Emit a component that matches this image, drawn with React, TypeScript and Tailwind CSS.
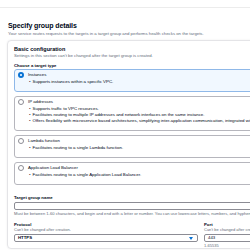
const font = "font-['Liberation_Sans',Arial,sans-serif]";

type TargetType = {
  label: string;
  bullets: string[];
  selected?: boolean;
};

const targetTypes: TargetType[] = [
  {
    label: 'Instances',
    bullets: ['Supports instances within a specific VPC.'],
    selected: true,
  },
  {
    label: 'IP addresses',
    bullets: [
      'Supports traffic to VPC resources.',
      'Facilitates routing to multiple IP addresses and network interfaces on the same instance.',
      'Offers flexibility with microservice based architectures, simplifying inter-application communication, integrated with AWS services.',
    ],
  },
  {
    label: 'Lambda function',
    bullets: ['Facilitates routing to a single Lambda function.'],
  },
  {
    label: 'Application Load Balancer',
    bullets: ['Facilitates routing to a single Application Load Balancer.'],
  },
];

function Radio({ checked }: { checked?: boolean }) {
  return checked ? (
    <span className="w-[6px] h-[6px] rounded-full border-[2px] border-[#0972d3] bg-white shrink-0" />
  ) : (
    <span className="w-[6px] h-[6px] rounded-full border border-[#8c8c94] bg-white shrink-0" />
  );
}

function TargetCard({ item }: { item: TargetType }) {
  return (
    <div
      className={
        item.selected
          ? 'rounded-[3px] border border-[#8fb8e8] bg-[#f1f8ff] pl-[3px] pt-[2px] pb-[6px]'
          : 'rounded-[3px] border border-[#b6b6bd] bg-white pl-[3px] pt-[2px] pb-[6px]'
      }
    >
      <div className="flex items-center gap-[4px] h-[6px]">
        <Radio checked={item.selected} />
        <span className="text-[4.3px] leading-[6px] text-[#000716]">{item.label}</span>
      </div>
      <ul className="mt-[1px] pl-[11px]">
        {item.bullets.map((b, i) => (
          <li key={i} className="flex gap-[2px] text-[4.4px] leading-[6px] text-[#000716] whitespace-nowrap">
            <span>•</span>
            <span>{b}</span>
          </li>
        ))}
      </ul>
    </div>
  );
}

export default function App() {
  return (
    <div className={`w-[250px] h-[250px] overflow-hidden bg-white ${font}`}>
      <div className="w-[340px]">
        {/* Header strip */}
        <div className="h-[8px] border-b border-[#ececec]" />

        <div className="px-[8px] pt-[13px]">
          <h1 className="text-[7px] leading-[9px] font-bold text-[#000716] tracking-[-0.1px]">
            Specify group details
          </h1>
          <p className="text-[4.3px] leading-[6px] text-[#5f6b7a] mt-[1px] whitespace-nowrap">
            Your service routes requests to the targets in a target group and performs health checks on the targets.
          </p>

          {/* Basic configuration */}
          <div className="mt-[3px] -ml-[1px] rounded-[4px] border border-[#e4e4e7] shadow-[0_0_2px_rgba(0,7,22,0.08)] px-[6px] pt-[5px]">
            <h2 className="text-[5.5px] leading-[6px] font-bold text-[#000716]">Basic configuration</h2>
            <p className="text-[4.3px] leading-[5px] text-[#5f6b7a] mt-[1px] whitespace-nowrap">
              Settings in this section can't be changed after the target group is created.
            </p>

            <div className="mt-[5px] text-[4.3px] leading-[5px] font-bold text-[#000716]">Choose a target type</div>
            <div className="mt-[1px] flex flex-col gap-[4px]">
              {targetTypes.map((t) => (
                <TargetCard key={t.label} item={t} />
              ))}
            </div>

            <div className="mt-[10px] text-[4.3px] leading-[5px] font-bold text-[#000716]">Target group name</div>
            <div className="mt-[2px] h-[8px] rounded-[2px] border border-[#8c8c94]" />
            <p className="mt-[1px] text-[4.1px] leading-[6px] text-[#5f6b7a] whitespace-nowrap">
              Must be between 1-60 characters, and begin and end with a letter or number. You can use lowercase letters, numbers, and hyphens. Don't use underscores.
            </p>

            <div className="mt-[5px] flex gap-[6px]">
              <div className="w-[184px]">
                <div className="text-[4.3px] leading-[5px] font-bold text-[#000716]">Protocol</div>
                <div className="text-[4px] leading-[5px] text-[#5f6b7a]">Can't be changed after creation.</div>
                <div className="mt-[2px] h-[8px] rounded-[2px] border border-[#8c8c94] flex items-center justify-between pl-[3px] pr-[4px]">
                  <span className="text-[4.3px] font-bold text-[#000716]">HTTPS</span>
                  <span className="w-0 h-0 border-l-[2px] border-r-[2px] border-t-[3px] border-l-transparent border-r-transparent border-t-[#0972d3]" />
                </div>
              </div>
              <div className="w-[80px]">
                <div className="text-[4.3px] leading-[5px] font-bold text-[#000716]">Port</div>
                <div className="text-[4px] leading-[5px] text-[#5f6b7a] whitespace-nowrap">Can't be changed after creation.</div>
                <div className="mt-[2px] h-[8px] rounded-[2px] border border-[#8c8c94] flex items-center pl-[3px]">
                  <span className="text-[4.3px] text-[#000716]">443</span>
                </div>
                <div className="mt-[1px] text-[4px] leading-[5px] text-[#5f6b7a]">1-65535</div>
              </div>
            </div>
          </div>
        </div>
      </div>
    </div>
  );
}
